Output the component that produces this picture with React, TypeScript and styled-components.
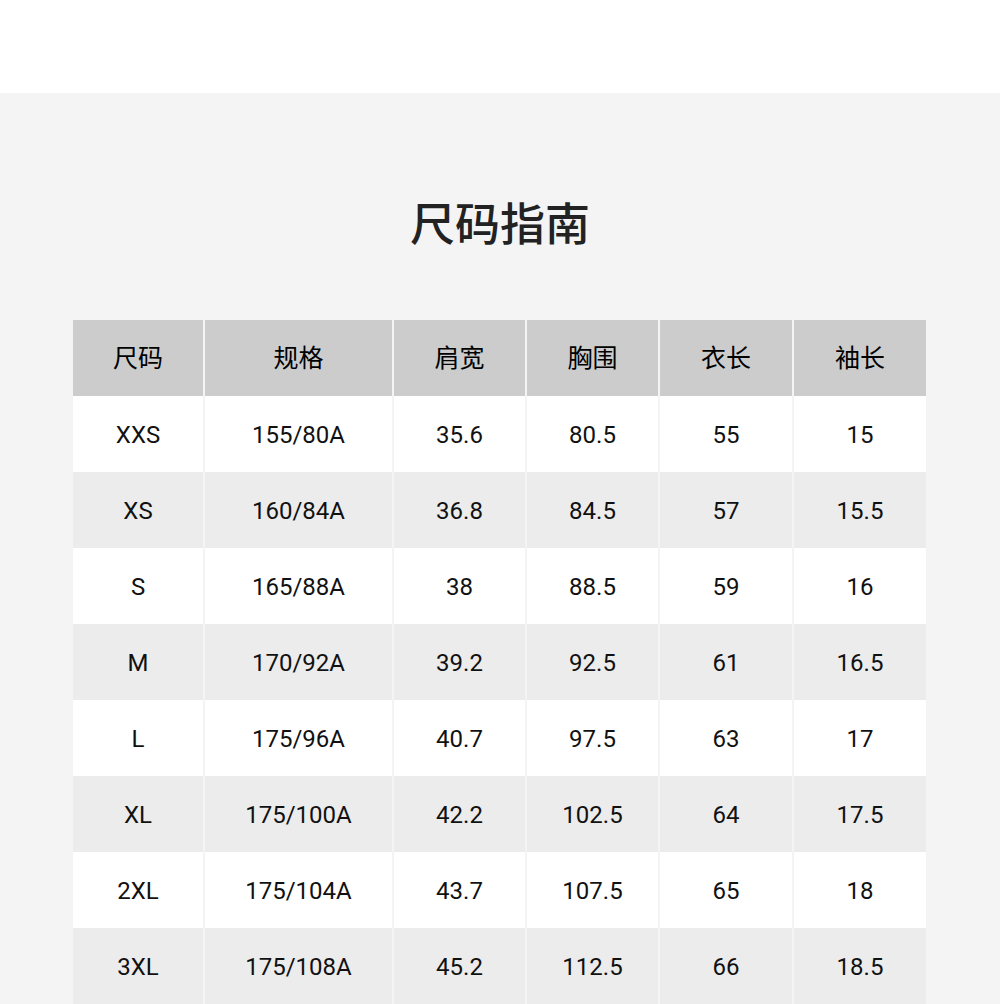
import React from 'react';
import styled, { createGlobalStyle } from 'styled-components';

const GlobalStyle = createGlobalStyle`
  html, body {
    margin: 0;
    padding: 0;
    background: #f4f4f4;
    font-family: Roboto, "Noto Sans CJK SC", sans-serif;
  }
`;

const TopBar = styled.div`
  height: 93px;
  background: #ffffff;
`;

const Section = styled.section`
  background: #f4f4f4;
  padding: 99px 0 0 73px;
  min-height: 911px;
  box-sizing: border-box;
`;

const Title = styled.h1`
  margin: 0 0 68px -73px;
  height: 60px;
  line-height: 60px;
  text-align: center;
  font-family: "Noto Sans CJK SC", sans-serif;
  font-size: 45px;
  font-weight: 500;
  color: #222222;
`;

const Grid = styled.div`
  display: grid;
  grid-template-columns: 130px 187px 131px 131px 132px 132px;
  column-gap: 2px;
  width: 853px;
`;

const HeadCell = styled.div`
  height: 76px;
  padding-bottom: 5px;
  box-sizing: border-box;
  display: flex;
  align-items: center;
  justify-content: center;
  background: #cccccc;
  font-family: "Noto Sans CJK SC", sans-serif;
  font-size: 25px;
  color: #000000;
`;

const Cell = styled.div<{ $alt: boolean }>`
  height: 76px;
  padding-top: 2px;
  box-sizing: border-box;
  display: flex;
  align-items: center;
  justify-content: center;
  background: ${p => (p.$alt ? '#ececec' : '#ffffff')};
  font-family: Roboto, sans-serif;
  font-size: 24px;
  color: #111111;
`;

const heads = ['尺码', '规格', '肩宽', '胸围', '衣长', '袖长'];

const rows = [
  ['XXS', '155/80A', '35.6', '80.5', '55', '15'],
  ['XS', '160/84A', '36.8', '84.5', '57', '15.5'],
  ['S', '165/88A', '38', '88.5', '59', '16'],
  ['M', '170/92A', '39.2', '92.5', '61', '16.5'],
  ['L', '175/96A', '40.7', '97.5', '63', '17'],
  ['XL', '175/100A', '42.2', '102.5', '64', '17.5'],
  ['2XL', '175/104A', '43.7', '107.5', '65', '18'],
  ['3XL', '175/108A', '45.2', '112.5', '66', '18.5'],
];

export default function App() {
  return (
    <>
      <GlobalStyle />
      <TopBar />
      <Section>
        <Title>尺码指南</Title>
        <Grid>
          {heads.map(h => (
            <HeadCell key={h}>{h}</HeadCell>
          ))}
          {rows.map((row, i) =>
            row.map((v, j) => (
              <Cell key={`${i}-${j}`} $alt={i % 2 === 1}>
                {v}
              </Cell>
            ))
          )}
        </Grid>
      </Section>
    </>
  );
}
